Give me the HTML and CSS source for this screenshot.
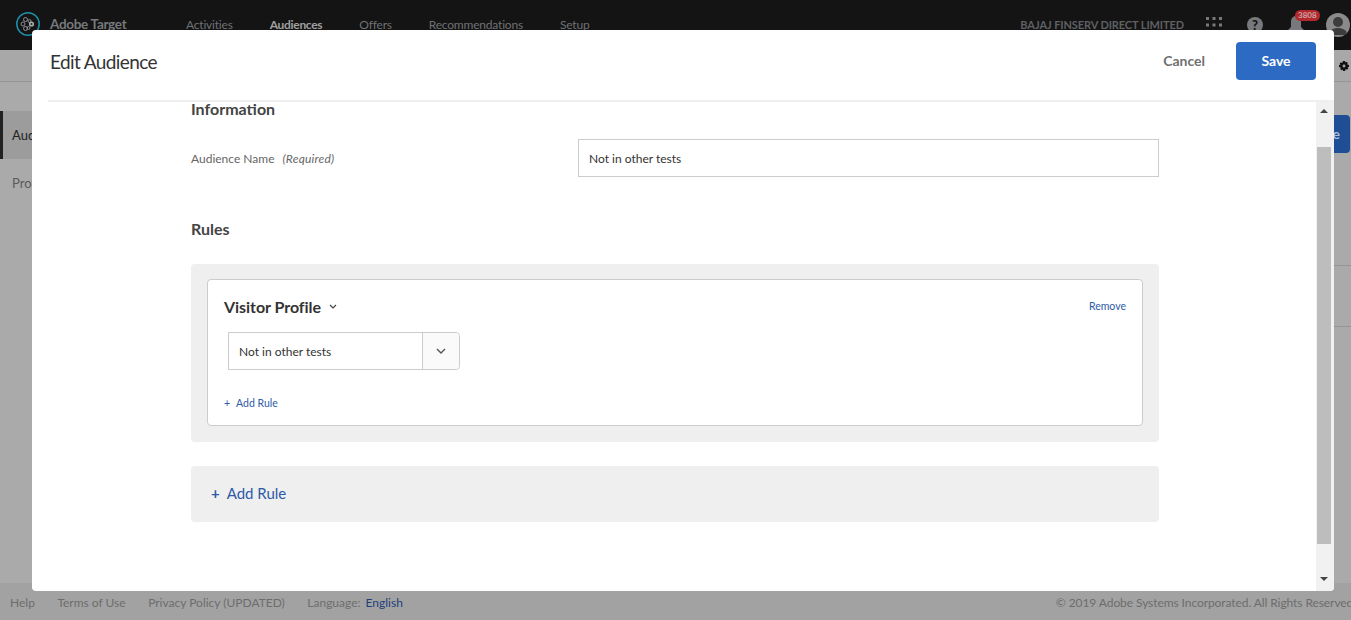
FILE: index.html
```html
<!DOCTYPE html>
<html lang="en">
<head>
<meta charset="utf-8">
<title>Edit Audience - Adobe Target</title>
<link rel="stylesheet" href="styles.css">
</head>
<body>
<div class="page">
  <header class="topbar">
    <div class="brand">
      <svg class="logo" width="26" height="26" viewBox="0 0 26 26" fill="none">
        <circle cx="13" cy="13" r="11.2" stroke="#1f8fa8" stroke-width="1.5"/>
        <g stroke="#8a8f94" stroke-width="1">
          <circle cx="10.5" cy="8.5" r="2"/>
          <circle cx="8" cy="13" r="2"/>
          <circle cx="10.5" cy="17.5" r="2"/>
          <circle cx="14.5" cy="10" r="1.5"/>
          <circle cx="13.5" cy="17" r="1.5"/>
        </g>
        <circle cx="16.5" cy="13" r="2.6" fill="#a9adb0"/>
        <circle cx="16.5" cy="13" r="1" fill="#222"/>
      </svg>
      <span class="brand-name">Adobe Target</span>
    </div>
    <nav class="nav">
      <span class="nav-item">Activities</span>
      <span class="nav-item nav-active">Audiences</span>
      <span class="nav-item">Offers</span>
      <span class="nav-item">Recommendations</span>
      <span class="nav-item">Setup</span>
    </nav>
    <div class="top-right">
      <span class="company">BAJAJ FINSERV DIRECT LIMITED</span>
      <svg class="apps" width="16" height="16" viewBox="0 0 16 16" fill="#77797c">
        <rect x="0" y="0" width="3" height="3"/><rect x="6.500" y="0" width="3" height="3"/><rect x="13" y="0" width="3" height="3"/>
        <rect x="0" y="6.500" width="3" height="3"/><rect x="6.500" y="6.500" width="3" height="3"/><rect x="13" y="6.500" width="3" height="3"/>
        <rect x="0" y="13" width="3" height="3"/><rect x="6.500" y="13" width="3" height="3"/><rect x="13" y="13" width="3" height="3"/>
      </svg>
      <span class="help">?</span>
      <span class="bell">
        <svg width="16" height="18" viewBox="0 0 16 18" fill="#77797c"><path d="M8 0c3 0 5 2.500 5 6v5l3 3v1H0v-1l3-3V6c0-3.500 2-6 5-6z"/></svg>
        <span class="badge">3808</span>
      </span>
      <span class="avatar">
        <svg width="24" height="24" viewBox="0 0 24 24" fill="#3c3c3c"><circle cx="12" cy="9" r="5"/><path d="M3 22c0-5 4-7 9-7s9 2 9 7z"/></svg>
      </span>
    </div>
  </header>

  <div class="subbar">
    <svg class="gear" width="10" height="10" viewBox="0 0 10 10" fill="#111"><path d="M4 0h2l.3 1.400 1.200-.7 1.300 1.300-.7 1.200L10 4v2l-1.400.3.700 1.200-1.300 1.300-1.200-.7L6 10H4l-.3-1.400-1.200.7-1.300-1.300.7-1.200L0 6V4l1.400-.3-.7-1.200L2 1.200l1.200.7z"/><circle cx="5" cy="5" r="1.400" fill="#a8a8a8"/></svg>
  </div>

  <div class="workspace">
    <aside class="sidebar">
      <div class="side-item side-active">Audiences</div>
      <div class="side-item">Profile Scripts</div>
    </aside>
    <div class="listing">
      <div class="list-head"><span class="create-btn">Create</span></div>
      <div class="list-row"></div>
    </div>
  </div>

  <footer class="footer">
    <div class="foot-links">
      <span>Help</span>
      <span>Terms of Use</span>
      <span>Privacy Policy (UPDATED)</span>
      <span>Language: <span class="foot-lang">English</span></span>
    </div>
    <span class="copyright">© 2019 Adobe Systems Incorporated. All Rights Reserved.</span>
  </footer>
</div>

<section class="modal">
  <div class="modal-head">
    <h1 class="modal-title">Edit Audience</h1>
    <div class="modal-actions">
      <span class="cancel">Cancel</span>
      <span class="save">Save</span>
    </div>
  </div>
  <div class="modal-body">
    <main class="form">
      <h2 class="section-title info-title">Information</h2>
      <div class="field-row">
        <label class="field-label">Audience Name <em class="required">(Required)</em></label>
        <div class="text-input">Not in other tests</div>
      </div>
      <h2 class="section-title rules-title">Rules</h2>
      <div class="rule-box">
        <div class="rule-card">
          <div class="rule-head">
            <span class="rule-name">Visitor Profile</span>
            <svg class="rule-caret" width="8" height="5" viewBox="0 0 8 5" fill="none" stroke="#444" stroke-width="1.200"><path d="M1 1l3 3 3-3"/></svg>
            <span class="remove">Remove</span>
          </div>
          <div class="combo">
            <span class="combo-value">Not in other tests</span>
            <span class="combo-btn">
              <svg width="10" height="6" viewBox="0 0 10 6" fill="none" stroke="#555" stroke-width="1.400"><path d="M1 1l4 4 4-4"/></svg>
            </span>
          </div>
          <div class="small-add"><span class="small-plus">+</span>Add Rule</div>
        </div>
      </div>
      <div class="add-box"><span class="big-plus">+</span>Add Rule</div>
    </main>
    <div class="scrollbar">
      <span class="arrow-up"></span>
      <div class="thumb"></div>
      <span class="arrow-down"></span>
    </div>
  </div>
</section>
</body>
</html>
```
FILE: styles.css
```css
* { box-sizing: border-box; }
html, body { margin: 0; height: 100%; overflow: hidden; }
body { font-family: "Lato", "Open Sans", sans-serif; font-size: 13px; color: #444; background: #a8a8a8; }

.page { width: 1351px; height: 620px; display: flex; flex-direction: column; }

.topbar { height: 50px; flex: none; background: #141414; display: flex; align-items: flex-start; padding-top: 11px; color: #6f7174; }
.brand { display: flex; align-items: center; width: 186px; padding-left: 15px; gap: 9px; }
.logo { flex: none; }
.brand-name { font-size: 13.500px; font-weight: 700; color: #77797d; letter-spacing: -.3px; }
.nav { display: flex; gap: 37px; padding-top: 5px; font-size: 12px; line-height: 18px; letter-spacing: -.2px; }
.nav-active { color: #a0a0a0; font-weight: 700; letter-spacing: -.3px; }
.top-right { margin-left: auto; display: flex; align-items: center; height: 28px; padding-right: 1px; }
.company { font-size: 11px; font-weight: 700; color: #5f6063; margin-right: 22px; letter-spacing: -.1px; position: relative; top: -1px; }
.apps { margin-right: 25px; }
.help { width: 16px; height: 16px; border-radius: 50%; background: #77797c; color: #141414; font-size: 13px; font-weight: 900; line-height: 16px; text-align: center; margin-right: 25px; }
.bell { position: relative; display: block; width: 16px; height: 18px; margin-right: 22px; }
.bell svg { display: block; }
.badge { position: absolute; top: -6px; left: 7px; padding: 0 3px; height: 11px; border-radius: 6px; background: #b3282d; color: #c9a5a6; font-size: 8px; font-weight: 700; line-height: 11px; }
.avatar { width: 24px; height: 24px; border-radius: 50%; background: #8a8a8a; overflow: hidden; }
.avatar svg { display: block; }

.subbar { height: 32px; flex: none; border-bottom: 1px solid #959595; background: #a8a8a8; display: flex; align-items: center; justify-content: flex-end; padding-right: 2px; }

.workspace { flex: 1; display: flex; background: #aaaaaa; }
.sidebar { width: 160px; padding-top: 29px; }
.side-item { height: 48px; padding-left: 12px; line-height: 48px; font-size: 13px; color: #5b5b5b; }
.side-active { border-left: 3px solid #222; padding-left: 9px; background: #9c9c9c; color: #222; }
.listing { flex: 1; padding-top: 33px; }
.list-head { height: 151px; display: flex; justify-content: flex-end; align-items: flex-start; border-bottom: 1px solid #959595; }
.create-btn { width: 80px; height: 38px; margin-right: 1px; background: #1f4e94; color: #a9bfdc; border-radius: 0 4px 4px 0; display: block; line-height: 38px; font-weight: 700; text-align: right; padding-right: 10px; font-size: 14px; }
.list-row { height: 61px; border-bottom: 1px solid #959595; }

.footer { height: 37px; flex: none; background: #a2a2a2; display: flex; justify-content: space-between; align-items: center; padding: 1px 0 0 10px; font-size: 12px; color: #6d6d6d; white-space: nowrap; }
.foot-links { display: flex; gap: 22.500px; }
.foot-lang { color: #1f3f7a; margin-left: 2px; }
.copyright { margin-right: -5px; letter-spacing: -.08px; }

.modal { position: absolute; left: 32px; top: 30px; width: 1302px; height: 561px; background: #fff; border-radius: 4px; display: flex; flex-direction: column; overflow: hidden; }
.modal-head { height: 72px; flex: none; margin-left: 16px; display: flex; justify-content: space-between; padding: 0 18px 0 2px; border-bottom: 2px solid #efefef; }
.modal-title { margin: 0; padding-top: 18px; font-size: 19px; line-height: 27px; font-weight: 400; color: #333; letter-spacing: -.6px; }
.modal-actions { display: flex; align-items: flex-start; padding-top: 12px; gap: 31px; }
.cancel { font-size: 14px; font-weight: 700; line-height: 38px; color: #707070; }
.save { width: 80px; height: 38px; border-radius: 4px; background: #2d6ac4; color: #fff; font-size: 14px; font-weight: 700; line-height: 38px; text-align: center; }

.modal-body { flex: 1; display: flex; min-height: 0; }
.form { flex: 1; padding: 0 0 0 159px; }
.section-title { margin: 0; font-size: 16px; font-weight: 700; color: #444; line-height: 22px; }
.info-title { margin-top: -4px; }
.field-row { width: 968px; display: flex; align-items: center; margin-top: 19px; }
.field-label { width: 387px; font-size: 12px; color: #666; }
.required { margin-left: 5px; letter-spacing: .2px; }
.text-input { flex: 1; height: 38px; border: 1px solid #ccc; padding-left: 10px; line-height: 37px; font-size: 12px; color: #333; }
.rules-title { margin-top: 41px; }
.rule-box { width: 968px; height: 178px; margin-top: 24px; padding: 15px 16px; background: #efefef; border-radius: 4px; }
.rule-card { height: 147px; background: #fff; border: 1px solid #ccc; border-radius: 4px; padding: 15px 16px 0 16px; }
.rule-head { display: flex; align-items: center; height: 22px; }
.rule-name { font-size: 16px; font-weight: 700; color: #333; letter-spacing: -.05px; }
.rule-caret { margin-left: 8px; }
.remove { margin-left: auto; font-size: 10.500px; color: #2d5aa8; }
.combo { width: 232px; height: 38px; margin: 15px 0 0 4px; display: flex; border: 1px solid #ccc; border-radius: 0 4px 4px 0; }
.combo-value { flex: 1; padding-left: 10px; line-height: 37px; font-size: 12px; color: #333; }
.combo-btn { width: 37px; border-left: 1px solid #ccc; background: #fafafa; border-radius: 0 4px 4px 0; display: flex; align-items: center; justify-content: center; }
.small-add { margin-top: 25px; font-size: 10.500px; line-height: 16px; color: #2d5aa8; }
.small-plus { margin-right: 6px; }
.add-box { width: 968px; height: 56px; margin-top: 24px; padding-left: 20px; background: #efefef; border-radius: 4px; line-height: 54px; font-size: 15px; color: #2d5aa8; }
.big-plus { margin-right: 7px; font-weight: 700; }

.scrollbar { width: 18px; flex: none; background: #f1f1f1; display: flex; flex-direction: column; align-items: center; padding: 7px 2px 7px 0; }
.arrow-up { width: 0; height: 0; border: 4px solid transparent; border-top: 0; border-bottom: 4px solid #444; }
.thumb { width: 14px; height: 397px; margin: 34px 0 33px; flex: none; background: #bdbdbd; }
.arrow-down { width: 0; height: 0; border: 4px solid transparent; border-bottom: 0; border-top: 4px solid #444; }
```
